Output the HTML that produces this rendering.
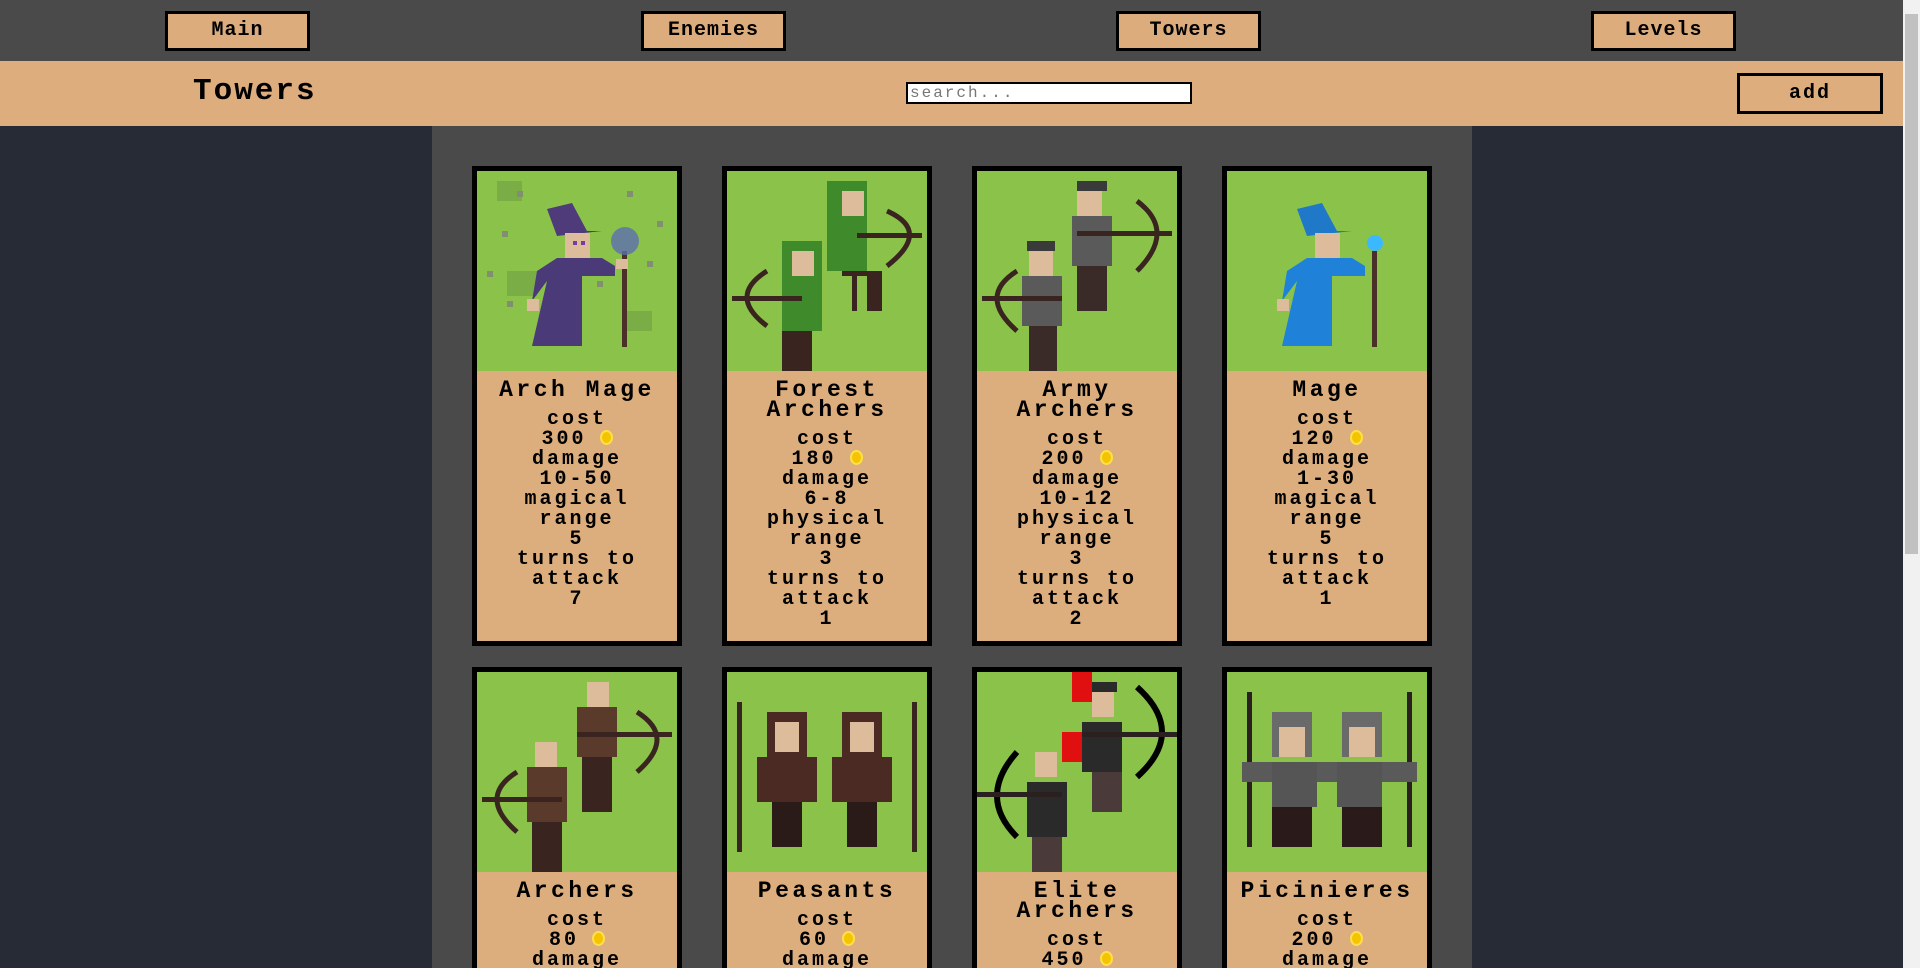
<!DOCTYPE html>
<html><head><meta charset="utf-8"><style>
*{box-sizing:border-box;margin:0;padding:0}
html{width:1920px;height:968px;overflow:hidden}
body{width:1920px;height:968px;overflow:hidden;background:#272b35;font-family:"Liberation Mono",monospace;font-weight:bold;color:#000;position:relative}
.nav{position:absolute;left:0;top:0;width:1903px;height:61px;background:#4a4a4a}
.nb{position:absolute;top:11px;width:145px;height:40px;background:#dcac7c;border:3px solid #000;font-size:20px;letter-spacing:1px;text-align:center;line-height:34px}
.hdr{position:absolute;left:0;top:61px;width:1903px;height:65px;background:#ddad7d}
.ttl{position:absolute;left:193px;top:13px;font-size:31px;letter-spacing:2px;line-height:36px}
.srch{position:absolute;left:906px;top:21px;width:286px;height:22px;background:#fff;border:2px solid #000;font-size:16px;color:#777;line-height:18px;padding-left:2px;letter-spacing:2px;font-weight:normal}
.add{position:absolute;left:1737px;top:12px;width:146px;height:41px;border:3px solid #000;font-size:20px;text-align:center;line-height:35px;letter-spacing:2px}
.main{position:absolute;left:432px;top:126px;width:1040px;height:842px;background:#4a4a4a}
.sb{position:absolute;left:1903px;top:0;width:17px;height:968px;background:#f1f1f1}
.sb div{position:absolute;left:2px;top:14px;width:13px;height:540px;background:#c1c1c1}
.card{position:absolute;width:210px;height:480px;border:5px solid #000;background:#dcae7e;overflow:hidden}
.r2{height:301px;border-bottom:0}
.img{width:200px;height:200px;background:#8bc34a;position:relative;overflow:hidden}
.img svg{position:absolute;left:0;top:0}
.body{text-align:center;padding-top:9px}
.t{font-size:23px;letter-spacing:3.5px;line-height:20px;margin-bottom:10px}
.s{font-size:20px;letter-spacing:3px;line-height:20px}
.coin{display:inline-block;width:13px;height:15px;border-radius:50%;background:#f5c400;border:2px solid #ffe04a;vertical-align:-1px;margin-left:-2px}
</style></head><body>
<div class="nav">
<div class="nb" style="left:165px">Main</div>
<div class="nb" style="left:641px">Enemies</div>
<div class="nb" style="left:1116px">Towers</div>
<div class="nb" style="left:1591px">Levels</div>
</div>
<div class="hdr"><div class="ttl">Towers</div><div class="srch">search...</div><div class="add">add</div></div>
<div class="main"></div>
<div class="sb"><div></div></div>

<div class="card" style="left:472px;top:166px"><div class="img"><svg width="200" height="200"><g fill="#7aad45"><rect x="20" y="10" width="25" height="20"/><rect x="30" y="100" width="30" height="25"/><rect x="150" y="140" width="25" height="20"/></g><g fill="#7f8f70"><rect x="40" y="20" width="6" height="6"/><rect x="25" y="60" width="6" height="6"/><rect x="10" y="100" width="6" height="6"/><rect x="150" y="20" width="6" height="6"/><rect x="180" y="50" width="6" height="6"/><rect x="170" y="90" width="6" height="6"/><rect x="30" y="130" width="6" height="6"/><rect x="120" y="110" width="6" height="6"/></g><polygon points="70,38 95,32 110,60 125,60 80,65" fill="#4f3a7a"/><rect x="88" y="62" width="25" height="25" fill="#dcbc9a"/><rect x="96" y="70" width="4" height="4" fill="#7a3aa0"/><rect x="104" y="70" width="4" height="4" fill="#7a3aa0"/><polygon points="80,87 125,87 138,95 138,105 105,105 105,175 55,175 70,110 55,130 60,100" fill="#4b3a78"/><rect x="50" y="128" width="12" height="12" fill="#dcbc9a"/><rect x="145" y="80" width="5" height="96" fill="#4a3028"/><circle cx="148" cy="70" r="14" fill="#5d6fb0" opacity=".8"/><rect x="139" y="88" width="12" height="10" fill="#dcbc9a"/></svg></div>
<div class="body"><div class="t">Arch Mage</div><div class="s">cost<br>300 <span class="coin"></span><br>damage<br>10-50<br>magical<br>range<br>5<br>turns to<br>attack<br>7</div></div></div>

<div class="card" style="left:722px;top:166px"><div class="img"><svg width="200" height="200"><rect x="100" y="10" width="40" height="90" fill="#3f8a2a"/><rect x="115" y="20" width="22" height="25" fill="#dcbc9a"/><rect x="115" y="100" width="40" height="40" fill="#3a2420"/><rect x="115" y="105" width="10" height="35" fill="#8bc34a"/><rect x="130" y="105" width="10" height="35" fill="#8bc34a"/><path d="M160 40 Q205 60 160 95" stroke="#3a2420" stroke-width="5" fill="none"/><rect x="130" y="62" width="65" height="5" fill="#3a2420"/><rect x="55" y="70" width="40" height="90" fill="#3f8a2a"/><rect x="65" y="80" width="22" height="25" fill="#dcbc9a"/><rect x="55" y="160" width="30" height="40" fill="#3a2420"/><path d="M40 100 Q0 125 40 155" stroke="#3a2420" stroke-width="5" fill="none"/><rect x="5" y="125" width="70" height="5" fill="#3a2420"/></svg></div>
<div class="body"><div class="t">Forest<br>Archers</div><div class="s">cost<br>180 <span class="coin"></span><br>damage<br>6-8<br>physical<br>range<br>3<br>turns to<br>attack<br>1</div></div></div>

<div class="card" style="left:972px;top:166px"><div class="img"><svg width="200" height="200"><rect x="100" y="10" width="30" height="10" fill="#3a3a3a"/><rect x="100" y="20" width="25" height="25" fill="#dcbc9a"/><rect x="95" y="45" width="40" height="50" fill="#5a5a5a"/><rect x="100" y="95" width="30" height="45" fill="#3a2a28"/><path d="M160 30 Q200 60 160 100" stroke="#3a2420" stroke-width="5" fill="none"/><rect x="100" y="60" width="95" height="5" fill="#3a2420"/><rect x="50" y="70" width="28" height="10" fill="#3a3a3a"/><rect x="52" y="80" width="24" height="25" fill="#dcbc9a"/><rect x="45" y="105" width="40" height="50" fill="#5a5a5a"/><rect x="52" y="155" width="28" height="45" fill="#3a2a28"/><path d="M40 100 Q0 125 40 160" stroke="#3a2420" stroke-width="5" fill="none"/><rect x="5" y="125" width="80" height="5" fill="#3a2420"/></svg></div>
<div class="body"><div class="t">Army<br>Archers</div><div class="s">cost<br>200 <span class="coin"></span><br>damage<br>10-12<br>physical<br>range<br>3<br>turns to<br>attack<br>2</div></div></div>

<div class="card" style="left:1222px;top:166px"><div class="img"><svg width="200" height="200"><polygon points="70,38 95,32 110,60 125,60 80,65" fill="#1f78c8"/><rect x="88" y="62" width="25" height="25" fill="#dcbc9a"/><polygon points="80,87 125,87 138,95 138,105 105,105 105,175 55,175 70,110 55,130 60,100" fill="#1f82d8"/><rect x="50" y="128" width="12" height="12" fill="#dcbc9a"/><rect x="145" y="80" width="5" height="96" fill="#4a3028"/><circle cx="148" cy="72" r="8" fill="#3cb8ff"/></svg></div>
<div class="body"><div class="t">Mage</div><div class="s">cost<br>120 <span class="coin"></span><br>damage<br>1-30<br>magical<br>range<br>5<br>turns to<br>attack<br>1</div></div></div>

<div class="card r2" style="left:472px;top:667px"><div class="img"><svg width="200" height="200"><rect x="110" y="10" width="22" height="25" fill="#dcbc9a"/><rect x="100" y="35" width="40" height="50" fill="#5a3a2a"/><rect x="105" y="85" width="30" height="55" fill="#3a2420"/><path d="M160 40 Q200 65 160 100" stroke="#3a2420" stroke-width="5" fill="none"/><rect x="100" y="60" width="95" height="5" fill="#3a2420"/><rect x="58" y="70" width="22" height="25" fill="#dcbc9a"/><rect x="50" y="95" width="40" height="55" fill="#5a3a2a"/><rect x="55" y="150" width="30" height="50" fill="#3a2420"/><path d="M40 100 Q0 125 40 160" stroke="#3a2420" stroke-width="5" fill="none"/><rect x="5" y="125" width="80" height="5" fill="#3a2420"/></svg></div>
<div class="body"><div class="t">Archers</div><div class="s">cost<br>80 <span class="coin"></span><br>damage</div></div></div>

<div class="card r2" style="left:722px;top:667px"><div class="img"><svg width="200" height="200"><rect x="10" y="30" width="5" height="150" fill="#3a2420"/><rect x="185" y="30" width="5" height="150" fill="#3a2420"/><rect x="40" y="40" width="40" height="45" fill="#4a2a22"/><rect x="48" y="50" width="24" height="30" fill="#dcbc9a"/><rect x="30" y="85" width="60" height="45" fill="#4a2a22"/><rect x="45" y="130" width="30" height="45" fill="#2a1a18"/><rect x="115" y="40" width="40" height="45" fill="#4a2a22"/><rect x="123" y="50" width="24" height="30" fill="#dcbc9a"/><rect x="105" y="85" width="60" height="45" fill="#4a2a22"/><rect x="120" y="130" width="30" height="45" fill="#2a1a18"/></svg></div>
<div class="body"><div class="t">Peasants</div><div class="s">cost<br>60 <span class="coin"></span><br>damage</div></div></div>

<div class="card r2" style="left:972px;top:667px"><div class="img"><svg width="200" height="200"><rect x="95" y="0" width="20" height="30" fill="#e01010"/><rect x="115" y="10" width="25" height="10" fill="#2a2a2a"/><rect x="115" y="20" width="22" height="25" fill="#dcbc9a"/><rect x="105" y="50" width="40" height="50" fill="#2a2a2a"/><rect x="115" y="100" width="30" height="40" fill="#4a3a3a"/><path d="M160 15 Q210 60 160 105" stroke="#000" stroke-width="6" fill="none"/><rect x="100" y="60" width="100" height="5" fill="#2a2020"/><rect x="85" y="60" width="20" height="30" fill="#e01010"/><rect x="58" y="80" width="22" height="25" fill="#dcbc9a"/><rect x="50" y="110" width="40" height="55" fill="#2a2a2a"/><rect x="55" y="165" width="30" height="35" fill="#4a3a3a"/><path d="M40 80 Q0 125 40 165" stroke="#000" stroke-width="6" fill="none"/><rect x="0" y="120" width="85" height="5" fill="#2a2020"/></svg></div>
<div class="body"><div class="t">Elite<br>Archers</div><div class="s">cost<br>450 <span class="coin"></span></div></div></div>

<div class="card r2" style="left:1222px;top:667px"><div class="img"><svg width="200" height="200"><rect x="20" y="20" width="5" height="155" fill="#2a2020"/><rect x="180" y="20" width="5" height="155" fill="#2a2020"/><rect x="45" y="40" width="40" height="45" fill="#6a6a6a"/><rect x="52" y="55" width="26" height="30" fill="#dcbc9a"/><rect x="15" y="90" width="90" height="20" fill="#5a5a5a"/><rect x="45" y="90" width="45" height="45" fill="#555"/><rect x="45" y="135" width="40" height="40" fill="#2a1a1a"/><rect x="115" y="40" width="40" height="45" fill="#6a6a6a"/><rect x="122" y="55" width="26" height="30" fill="#dcbc9a"/><rect x="105" y="90" width="85" height="20" fill="#5a5a5a"/><rect x="110" y="90" width="45" height="45" fill="#555"/><rect x="115" y="135" width="40" height="40" fill="#2a1a1a"/></svg></div>
<div class="body"><div class="t">Picinieres</div><div class="s">cost<br>200 <span class="coin"></span><br>damage</div></div></div>
</body></html>
